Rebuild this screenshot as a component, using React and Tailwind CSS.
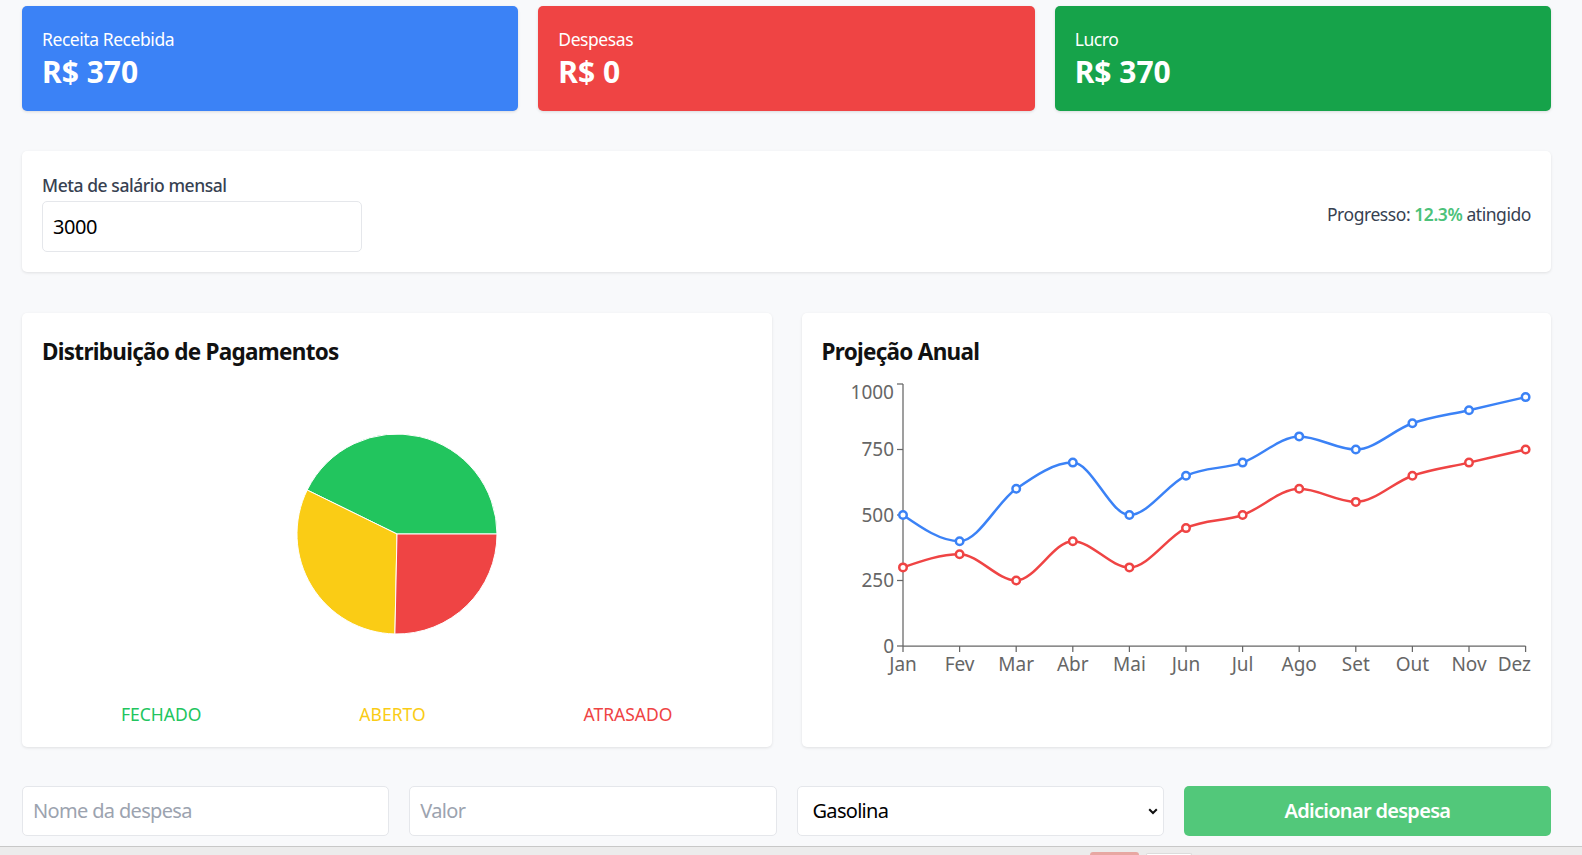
import React from "react";

const months = ["Jan","Fev","Mar","Abr","Mai","Jun","Jul","Ago","Set","Out","Nov","Dez"];
const receita = [500,400,600,700,500,650,700,800,750,850,900,950];
const despesa = [300,350,250,400,300,450,500,600,550,650,700,750];

const X0 = 81;
const STEP = 56.6;
const Y0 = 268;
const SCALE = 0.262;
const xs = months.map((_, i) => X0 + i * STEP);
const yOf = (v) => Y0 - v * SCALE;

function sign(x) { return x < 0 ? -1 : 1; }

function monotonePath(px, py) {
  const n = px.length;
  const m = new Array(n).fill(0);
  for (let i = 1; i < n - 1; i++) {
    const h0 = px[i] - px[i - 1];
    const h1 = px[i + 1] - px[i];
    const s0 = (py[i] - py[i - 1]) / h0;
    const s1 = (py[i + 1] - py[i]) / h1;
    const p = (s0 * h1 + s1 * h0) / (h0 + h1);
    m[i] = (sign(s0) + sign(s1)) * Math.min(Math.abs(s0), Math.abs(s1), 0.5 * Math.abs(p)) || 0;
  }
  {
    const h = px[1] - px[0];
    m[0] = (3 * (py[1] - py[0]) / h - m[1]) / 2;
    const hl = px[n - 1] - px[n - 2];
    m[n - 1] = (3 * (py[n - 1] - py[n - 2]) / hl - m[n - 2]) / 2;
  }
  let d = `M${px[0]},${py[0]}`;
  for (let i = 0; i < n - 1; i++) {
    const dx = (px[i + 1] - px[i]) / 3;
    d += ` C${px[i] + dx},${py[i] + dx * m[i]} ${px[i + 1] - dx},${py[i + 1] - dx * m[i + 1]} ${px[i + 1]},${py[i + 1]}`;
  }
  return d;
}

function LineChart() {
  const series = [
    { data: receita, color: "#3b82f6" },
    { data: despesa, color: "#ef4444" },
  ];
  return (
    <svg width="709" height="330" className="block tracking-normal">
      <line x1={X0} y1={yOf(1000)} x2={X0} y2={Y0} stroke="#666" strokeWidth="1.25" />
      {[0, 250, 500, 750, 1000].map((v) => (
        <g key={v}>
          <line x1={X0 - 6} y1={yOf(v)} x2={X0} y2={yOf(v)} stroke="#666" strokeWidth="1.25" />
          <text x={X0 - 9} y={yOf(v) + (v === 1000 ? 8 : 0)} dy="0.355em" textAnchor="end" fill="#666" fontSize="19">{v}</text>
        </g>
      ))}
      <line x1={X0} y1={Y0} x2={xs[11]} y2={Y0} stroke="#666" strokeWidth="1.25" />
      {months.map((mth, i) => (
        <g key={mth}>
          <line x1={xs[i]} y1={Y0} x2={xs[i]} y2={Y0 + 6} stroke="#666" strokeWidth="1.25" />
          <text
            x={i === 11 ? 709 : xs[i]}
            y={Y0 + 25}
            textAnchor={i === 11 ? "end" : "middle"}
            fill="#666"
            fontSize="19"
          >
            {mth}
          </text>
        </g>
      ))}
      {series.map((s, si) => {
        const py = s.data.map(yOf);
        return (
          <g key={si}>
            <path d={monotonePath(xs, py)} fill="none" stroke={s.color} strokeWidth="2.5" />
            {py.map((y, i) => (
              <circle key={i} cx={xs[i]} cy={y} r="3.75" fill="#fff" stroke={s.color} strokeWidth="2.5" />
            ))}
          </g>
        );
      })}
    </svg>
  );
}

function slice(cx, cy, r, a0, a1) {
  const rad = (a) => (a * Math.PI) / 180;
  const x0 = cx + r * Math.cos(rad(a0));
  const y0 = cy - r * Math.sin(rad(a0));
  const x1 = cx + r * Math.cos(rad(a1));
  const y1 = cy - r * Math.sin(rad(a1));
  const large = a1 - a0 > 180 ? 1 : 0;
  return `M${cx},${cy} L${x0},${y0} A${r},${r} 0 ${large} 0 ${x1},${y1} Z`;
}

function PieChart() {
  const c = 101;
  return (
    <svg width="202" height="202" className="block">
      <path d={slice(c, c, 100, 0, 153.9)} fill="#22c55e" stroke="#fff" strokeWidth="1" />
      <path d={slice(c, c, 100, 153.9, 268.8)} fill="#facc15" stroke="#fff" strokeWidth="1" />
      <path d={slice(c, c, 100, 268.8, 360)} fill="#ef4444" stroke="#fff" strokeWidth="1" />
    </svg>
  );
}

function StatCard({ label, value, bg }) {
  return (
    <div className={`${bg} rounded-[5px] px-5 pt-[21px] pb-[19px] text-white shadow-[0_1px_3px_rgba(0,0,0,0.12)]`}>
      <div className="text-[17.5px] leading-[25px] tracking-[-0.025em]">{label}</div>
      <div className="text-[30px] leading-[40px] font-bold">{value}</div>
    </div>
  );
}

export default function App() {
  return (
    <div className="h-[855px] overflow-hidden bg-[#f8f9fb] font-['Noto_Sans',sans-serif] flex flex-col">
      <div className="pt-[6px] pl-[22px] pr-[31px]">
        <div className="grid grid-cols-3 gap-5">
          <StatCard label="Receita Recebida" value="R$ 370" bg="bg-[#3b82f6]" />
          <StatCard label="Despesas" value="R$ 0" bg="bg-[#ef4444]" />
          <StatCard label="Lucro" value="R$ 370" bg="bg-[#16a34a]" />
        </div>

        <div className="mt-10 bg-white rounded-[5px] p-5 shadow-[0_1px_3px_rgba(0,0,0,0.1)] flex items-center justify-between">
          <div>
            <div className="text-[17.5px] leading-[28px] font-medium text-[#374151] mb-[2px] tracking-[-0.025em]">Meta de salário mensal</div>
            <div className="w-[320px] h-[51px] border border-[#e5e7eb] rounded-[5px] pl-[10px] flex items-center text-[20px] text-black tracking-[-0.02em]">3000</div>
          </div>
          <div className="text-[17.5px] text-[#374151] pt-[5px] tracking-[-0.025em]">
            Progresso: <span className="font-semibold text-[#4cc27a]">12.3%</span> atingido
          </div>
        </div>

        <div className="mt-[41px] grid grid-cols-2 gap-[30px]">
          <div className="bg-white rounded-[5px] p-5 h-[434px] shadow-[0_1px_3px_rgba(0,0,0,0.1)] flex flex-col">
            <div className="text-[22.5px] leading-[35px] font-bold text-[#111] tracking-[-0.032em] pt-[1px]">Distribuição de Pagamentos</div>
            <div className="mt-[64px] flex justify-center">
              <PieChart />
            </div>
            <div className="mt-[67px] flex justify-around text-[17.5px] leading-[24px]">
              <span className="text-[#22c55e]">FECHADO</span>
              <span className="text-[#facc15]">ABERTO</span>
              <span className="text-[#ef4444]">ATRASADO</span>
            </div>
          </div>
          <div className="bg-white rounded-[5px] p-5 h-[434px] shadow-[0_1px_3px_rgba(0,0,0,0.1)] flex flex-col">
            <div className="text-[22.5px] leading-[35px] font-bold text-[#111] tracking-[-0.032em] pt-[1px]">Projeção Anual</div>
            <div className="mt-[9px]">
              <LineChart />
            </div>
          </div>
        </div>

        <div className="mt-[39px] grid grid-cols-4 gap-5">
          <div className="h-[50px] bg-white border border-[#e5e7eb] rounded-[5px] pl-[10px] flex items-center text-[20px] text-[#9ca3af] tracking-[-0.033em]">Nome da despesa</div>
          <div className="h-[50px] bg-white border border-[#e5e7eb] rounded-[5px] pl-[10px] flex items-center text-[20px] text-[#9ca3af] tracking-[-0.033em]">Valor</div>
          <div className="relative h-[50px] bg-white border border-[#e5e7eb] rounded-[5px] pl-[15px] flex items-center text-[20px] text-black tracking-[-0.035em]">
            Gasolina
            <svg className="absolute right-[5px] top-[21px]" width="10" height="7" viewBox="0 0 10 7">
              <path d="M1.2 1.2 L5 5 L8.8 1.2" fill="none" stroke="#111" strokeWidth="2" />
            </svg>
          </div>
          <div className="h-[50px] bg-[#52c87a] rounded-[5px] flex items-center justify-center text-[20px] font-semibold text-white tracking-[-0.035em]">Adicionar despesa</div>
        </div>
      </div>

      <div className="mt-[10px] h-[9px] border-t border-[#c8c8c8] bg-[#ececec] flex items-end pl-[1090px] gap-[7px]">
        <div className="w-[49px] h-[3px] rounded-t-[6px] bg-[#e8a7a2]"></div>
        <div className="w-[46px] h-[2px] rounded-t-[6px] bg-white border border-[#dcdcdc] border-b-0"></div>
      </div>
    </div>
  );
}
